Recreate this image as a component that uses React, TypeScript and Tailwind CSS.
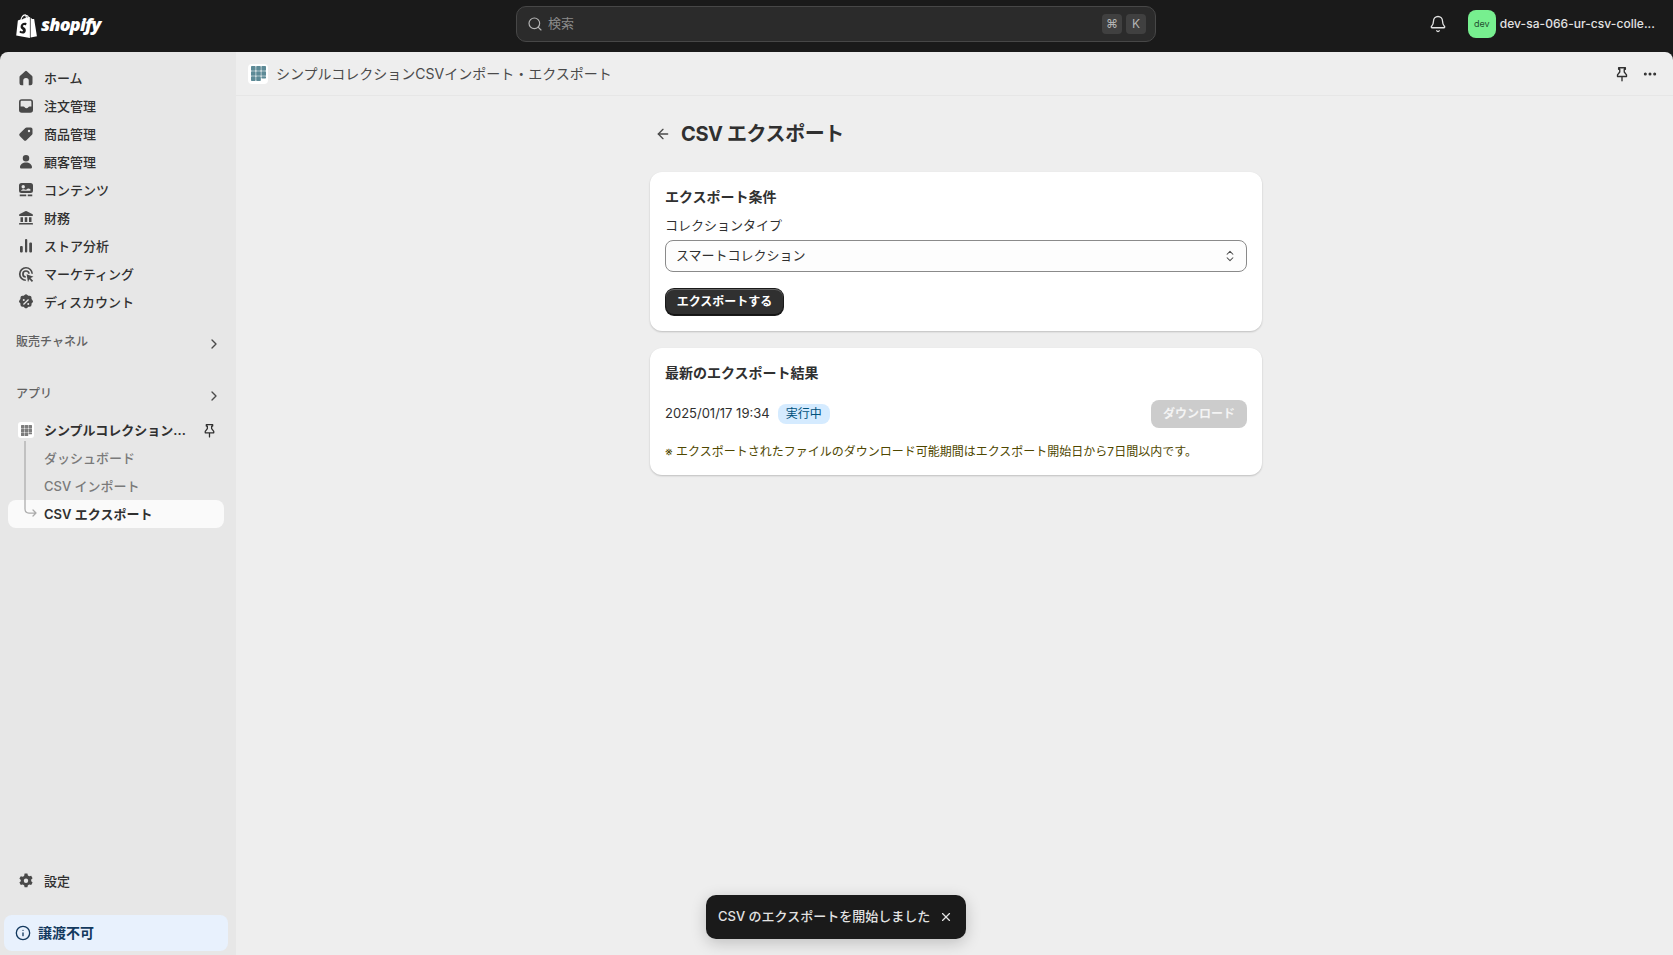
import { X, ChevronRight, Ellipsis, ArrowLeft, ChevronsUpDown, Search, Bell, Info } from "lucide-react"

const sans = "font-['Inter','Noto_Sans_CJK_JP',sans-serif]"

const icons: Record<string, string> = {
  home: "M9.14 3.14a1.25 1.25 0 0 1 1.72 0l5.25 4.96c.25.23.39.56.39.9v6.25a2 2 0 0 1-2 2h-1.75v-4.5a2.75 2.75 0 0 0-5.5 0v4.5h-1.75a2 2 0 0 1-2-2V9c0-.34.14-.67.39-.9z",
  orders: "M5.75 3.25A2.75 2.75 0 0 0 3 6v8a2.75 2.75 0 0 0 2.75 2.75h8.5A2.75 2.75 0 0 0 17 14V6a2.75 2.75 0 0 0-2.75-2.75zM4.6 10.6V6c0-.63.52-1.15 1.15-1.15h8.5c.63 0 1.15.52 1.15 1.15v4.6h-1.8a1.5 1.5 0 0 0-1.3.75 2.1 2.1 0 0 1-1.8 1 2.1 2.1 0 0 1-1.8-1 1.5 1.5 0 0 0-1.3-.75z",
  tag: "M10.6 3.5h4.15A1.75 1.75 0 0 1 16.5 5.25V9.4c0 .46-.18.9-.51 1.24l-5.6 5.6a1.75 1.75 0 0 1-2.47 0l-4.16-4.16a1.75 1.75 0 0 1 0-2.47l5.6-5.6c.33-.33.78-.51 1.24-.51zM13 8.2a1.2 1.2 0 1 0 0-2.4 1.2 1.2 0 0 0 0 2.4z",
  person: "M10 3a3.25 3.25 0 1 0 0 6.5A3.25 3.25 0 0 0 10 3zM10 10.5c-3.4 0-5.75 1.9-6 4.4-.1 1 .7 1.6 1.5 1.6h9c.8 0 1.6-.6 1.5-1.6-.25-2.5-2.6-4.4-6-4.4z",
  content: "M5.5 3A2.5 2.5 0 0 0 3 5.5v5A2.5 2.5 0 0 0 5.5 13h9a2.5 2.5 0 0 0 2.5-2.5v-5A2.5 2.5 0 0 0 14.5 3zM7.2 5a1.7 1.7 0 0 1 1.7 1.7c0 .9-.7 1.7-1.7 1.7a1.7 1.7 0 0 1 0-3.4zM5 10.8c.6-1 1.5-1.5 2.4-1.5 1 0 1.5.5 2.2.5 1 0 1.4-1.4 2.7-1.4.8 0 1.5.5 2.2 1.2v.7c0 .3-.2.5-.5.5H5zM3.75 14.5h6.5v1.75h-6.5zM11.75 14.5h4.5v1.75h-4.5z",
  bank: "M9.2 3.2a1.75 1.75 0 0 1 1.6 0l5.4 2.7c.5.25.8.75.8 1.3v.05c0 .4-.35.75-.75.75H3.75A.75.75 0 0 1 3 7.25V7.2c0-.55.3-1.05.8-1.3zM4.5 9.25H7V14H4.5zM8.75 9.25h2.5V14h-2.5zM13 9.25h2.5V14H13zM3.75 15h12.5a.75.75 0 0 1 .75.75v.75H3v-.75a.75.75 0 0 1 .75-.75z",
  chart: "M9 3.75A1 1 0 0 1 10 3h.25a1 1 0 0 1 1 1v11.5a1 1 0 0 1-1 1H10a1 1 0 0 1-1-1zM14.25 6.5H15a1 1 0 0 1 1 1v8a1 1 0 0 1-1 1h-.75a1 1 0 0 1-1-1v-8a1 1 0 0 1 1-1zM5 10h.75a1 1 0 0 1 1 1v4.5a1 1 0 0 1-1 1H5a1 1 0 0 1-1-1V11a1 1 0 0 1 1-1z",
  target: "M10 3a7 7 0 0 1 7 6.8h-1.6A5.4 5.4 0 1 0 9.8 15.4V17A7 7 0 0 1 10 3zm0 3.2a3.8 3.8 0 0 1 3.8 3.6h-1.6A2.2 2.2 0 1 0 9.8 12.2v1.6A3.8 3.8 0 0 1 10 6.2zM10.6 10.2l6.9 2.6-3 1.3 2.6 2.6-1.2 1.2-2.6-2.6-1.3 3z",
  discount: "M8.6 2.9a2 2 0 0 1 2.8 0l.9.85 1.25-.02a2 2 0 0 1 2 2l-.02 1.25.85.9a2 2 0 0 1 0 2.8l-.85.9.02 1.25a2 2 0 0 1-2 2l-1.25-.02-.9.85a2 2 0 0 1-2.8 0l-.9-.85-1.25.02a2 2 0 0 1-2-2l.02-1.25-.85-.9a2 2 0 0 1 0-2.8l.85-.9-.02-1.25a2 2 0 0 1 2-2l1.25.02zM7.75 9a1 1 0 1 0 0-2 1 1 0 0 0 0 2zm4.5 4a1 1 0 1 0 0-2 1 1 0 0 0 0 2zm.75-5-.9-.9-5.1 5 .9.9z",
  gear: "M8.6 2.6h2.8l.5 1.9 1.4.8 1.9-.5 1.4 2.4-1.4 1.4v1.6l1.4 1.4-1.4 2.4-1.9-.5-1.4.8-.5 1.9H8.6l-.5-1.9-1.4-.8-1.9.5-1.4-2.4 1.4-1.4V9l-1.4-1.4 1.4-2.4 1.9.5 1.4-.8zM10 12a2.2 2.2 0 1 0 0-4.4 2.2 2.2 0 0 0 0 4.4z",
}

const nav: [string, string][] = [
  ["home", "ホーム"],
  ["orders", "注文管理"],
  ["tag", "商品管理"],
  ["person", "顧客管理"],
  ["content", "コンテンツ"],
  ["bank", "財務"],
  ["chart", "ストア分析"],
  ["target", "マーケティング"],
  ["discount", "ディスカウント"],
]

function NavIcon({ name }: { name: string }) {
  return (
    <svg viewBox="0 0 20 20" className="w-5 h-5 shrink-0 text-[#4a4a4a]" fill="currentColor" fillRule="evenodd">
      <path d={icons[name]} />
    </svg>
  )
}

function NavItem({ icon, label }: { icon: string; label: string }) {
  return (
    <div className="flex items-center gap-2 h-7 pl-2 text-[13px] font-medium text-[#303030]">
      <NavIcon name={icon} />
      <span className="pt-[1px]">{label}</span>
    </div>
  )
}

function PinIcon({ className }: { className: string }) {
  return (
    <svg viewBox="0 0 20 20" className={className} fill="none" stroke="currentColor" strokeWidth="1.5" strokeLinejoin="round" strokeLinecap="round">
      <path d="M6.25 3h7.5v1.75H12.5v3l2.5 3.25v1.75H5V11l2.5-3.25v-3H6.25zM10 12.75V17.5" />
    </svg>
  )
}

function AppGrid({ className, color }: { className: string; color: string }) {
  const cells = [0, 1, 2]
  return (
    <svg viewBox="0 0 11 11" className={className}>
      {cells.map((r) =>
        cells.map((c) => <rect key={`${r}-${c}`} x={c * 3.8} y={r * 3.8} width="3.4" height={r === 2 && c === 2 ? 1.6 : 3.4} rx="0.5" fill={color} />)
      )}
    </svg>
  )
}

function ShopifyBag() {
  return (
    <svg viewBox="0 0 22 25" className="w-[22px] h-[25px]">
      <path fill="#fff" d="M18.2 5.2c0-.1-.1-.2-.2-.2l-1.9-.1-1.5-1.5V23.6l6.4-1.4S18.2 5.3 18.2 5.2zM13.7 2.9l-.8.3C12.5 1.9 11.8 1 10.6 1h-.1C10.1.5 9.6.2 9.2.2 6.3.2 4.9 3.8 4.5 5.6l-2 .6c-.6.2-.6.2-.7.8L.2 21.5 13.9 24V2.8zM9.8 3.9l-2.4.7c.4-1.5 1.1-2.3 1.8-2.5.3.4.6 1 .6 1.8zM9.2 1.500c.1 0 .3 0 .4.1-.9.4-1.800 1.400-2.200 3.400l-1.900.6C6 4 7.200 1.500 9.200 1.500zM10.700 8.900l-.8 2.500s-.7-.4-1.600-.4c-1.300 0-1.400.8-1.400 1 0 1.100 2.900 1.600 2.900 4.200 0 2.100-1.300 3.400-3.100 3.400-2.100 0-3.200-1.300-3.200-1.300l.6-1.900s1.100 1 2 1c.6 0 .9-.5.9-.8 0-1.500-2.400-1.500-2.400-3.900 0-2 1.500-4 4.400-4 1.100 0 1.700.7 1.700.7zM10.800 3.500v-.2c0-.6-.1-1.100-.2-1.400.6.1 1 .8 1.300 1.300z" />
    </svg>
  )
}

export default function App() {
  return (
    <div className={`${sans} h-[955px] w-[1673px] overflow-hidden bg-[#1a1a1a] flex flex-col relative`}>
      <header className="h-[52px] shrink-0 flex items-center relative">
        <div className="flex items-center gap-[3px] pl-[16px]">
          <ShopifyBag />
          <span className="font-['Open_Sans',sans-serif] italic font-extrabold text-[18px] tracking-[-0.8px] text-white mb-[3px]">shopify</span>
        </div>
        <div className="absolute left-[516px] top-[6px] w-[640px] h-9 rounded-[10px] bg-[#2b2b2b] border border-[#474747] flex items-center pl-[10px] pr-[9px]">
          <Search className="w-4 h-4 text-[#b5b5b5]" strokeWidth={1.75} />
          <span className="ml-[5px] text-[13px] text-[#8a8a8a]">検索</span>
          <div className="ml-auto flex gap-[4px]">
            <span className="w-5 h-5 rounded-[4px] bg-[#404040] text-[#b5b5b5] text-[12px] flex items-center justify-center">⌘</span>
            <span className="w-5 h-5 rounded-[4px] bg-[#404040] text-[#b5b5b5] text-[12px] flex items-center justify-center">K</span>
          </div>
        </div>
        <div className="ml-auto flex items-center pr-[18px] mb-[4px]">
          <Bell className="w-[18px] h-[18px] text-[#e3e3e3] mr-[21px]" strokeWidth={1.75} />
          <div className="w-7 h-7 rounded-[8px] bg-[#77ef8f] text-[#1f5130] text-[9px] flex items-center justify-center mr-[4px]">dev</div>
          <span className="text-[12px] tracking-[0.05px] font-medium text-[#e3e3e3]">dev-sa-066-ur-csv-colle...</span>
        </div>
      </header>

      <div className="flex flex-1 min-h-0">
        <aside className="w-[236px] shrink-0 bg-[#e7e7e7] rounded-tl-[8px] flex flex-col pt-3 relative">
          <nav className="px-2">
            {nav.map(([icon, label]) => (
              <NavItem key={label} icon={icon} label={label} />
            ))}
            <div className="mt-[14px] h-7 flex items-center justify-between pl-2 pr-[6px]">
              <span className="text-[12px] font-medium text-[#616161] mb-[5px]">販売チャネル</span>
              <ChevronRight className="w-4 h-4 text-[#4a4a4a]" />
            </div>
            <div className="mt-6 h-7 flex items-center justify-between pl-2 pr-[6px]">
              <span className="text-[12px] font-medium text-[#616161] mb-[5px]">アプリ</span>
              <ChevronRight className="w-4 h-4 text-[#4a4a4a]" />
            </div>
            <div className="mt-[6px] relative">
              <div className="h-7 flex items-center pl-[10px] pr-[8px] text-[13px] font-semibold text-[#303030]">
                <span className="w-4 h-4 rounded-[3px] bg-white flex items-center justify-center shrink-0">
                  <AppGrid className="w-[11px] h-[11px]" color="#7d7d7d" />
                </span>
                <span className="ml-[10px] pt-[1px] w-[142px] truncate">シンプルコレクション...</span>
                <PinIcon className="ml-[15px] w-[17px] h-[17px] text-[#303030]" />
              </div>
              <div className="h-7 flex items-center pl-9 pt-[1px] text-[13px] font-medium text-[#7a7a7a]">ダッシュボード</div>
              <div className="h-7 flex items-center pl-9 pt-[1px] text-[13px] font-medium text-[#7a7a7a]">CSV インポート</div>
              <div className="h-7 flex items-center pl-9 pt-[1px] text-[13px] font-semibold text-[#303030] bg-[#fafafa] rounded-[8px] w-[216px]">CSV エクスポート</div>
              <svg viewBox="0 0 20 76" className="absolute left-[12px] top-[25px] w-5 h-[76px]" fill="none" stroke="#ababab" strokeWidth="1.25" strokeLinecap="round" strokeLinejoin="round">
                <path d="M5 0v68q0 4 4 4h7M13 69l3 3-3 3" />
              </svg>
            </div>
          </nav>
          <div className="mt-auto px-2">
            <NavItem icon="gear" label="設定" />
          </div>
          <div className="ml-[4px] mr-[8px] mt-[20px] mb-[4px] h-[36px] rounded-[8px] bg-[#e8f1fd] flex items-center gap-[7px] pl-[11px] text-[14px] font-semibold text-[#13395e]">
            <Info className="w-4 h-4" strokeWidth={2} />
            <span className="mb-[1px]">譲渡不可</span>
          </div>
        </aside>

        <main className="flex-1 bg-[#eeeeee] rounded-tr-[8px] flex flex-col min-w-0">
          <div className="h-[44px] shrink-0 border-b border-[#e6e6e6] flex items-center pl-3 pr-[14px]">
            <span className="w-5 h-5 rounded-[4px] bg-white flex items-center justify-center">
              <AppGrid className="w-[15px] h-[15px]" color="#5d8a96" />
            </span>
            <span className="ml-2 text-[14px] text-[#4a4a4a]">シンプルコレクションCSVインポート・エクスポート</span>
            <PinIcon className="ml-auto w-[18px] h-[18px] text-[#303030]" />
            <Ellipsis className="ml-[11px] mr-[1px] w-4 h-4 text-[#303030]" strokeWidth={2.5} />
          </div>

          <div className="w-[612px] ml-[414px] pt-[24px] text-[#303030]">
            <div className="flex items-center h-[28px] pl-[5px] mb-[24px]">
              <ArrowLeft className="w-4 h-4 text-[#4a4a4a]" strokeWidth={2} />
              <h1 className="ml-[10px] text-[20px] tracking-[-0.4px] font-bold text-[#303030]">CSV エクスポート</h1>
            </div>

            <section className="h-[159px] bg-white rounded-[12px] shadow-[0_1px_2px_rgba(0,0,0,0.2)] px-[15px] pt-[15px]">
              <h2 className="text-[14px] leading-5 font-semibold">エクスポート条件</h2>
              <div className="mt-[9px] text-[13px] leading-[18px] text-[#303030]">コレクションタイプ</div>
              <div className="mt-[6px] h-8 rounded-[8px] border border-[#8a8a8a] bg-[#fdfdfd] flex items-center pl-[10px] pr-[9px] text-[13px] text-[#303030]">
                スマートコレクション
                <ChevronsUpDown className="ml-auto w-[14px] h-[14px] text-[#4a4a4a]" strokeWidth={1.75} />
              </div>
              <button className="block ml-[1px] mt-[17px] h-[26px] w-[117px] rounded-[8px] bg-[#303030] shadow-[inset_0_1px_0_rgba(255,255,255,0.25),inset_0_-1px_0_rgba(0,0,0,0.6),0_0_0_1px_#1a1a1a] text-white text-[12px] font-semibold">
                エクスポートする
              </button>
            </section>

            <section className="mt-[17px] h-[127px] bg-white rounded-[12px] shadow-[0_1px_2px_rgba(0,0,0,0.2)] px-[15px] pt-[15px]">
              <h2 className="text-[14px] leading-5 font-semibold">最新のエクスポート結果</h2>
              <div className="mt-[17px] h-7 flex items-center">
                <span className="text-[13px]">2025/01/17 19:34</span>
                <span className="ml-2 h-5 w-[52px] rounded-[8px] bg-[#d5ebff] text-[#00527c] text-[12px] flex items-center justify-center">実行中</span>
                <button className="ml-auto h-7 w-[96px] rounded-[8px] bg-[#cccccc] text-[#f4f4f4] text-[12px] font-semibold">ダウンロード</button>
              </div>
              <p className="mt-[16px] text-[12px] leading-4 text-[#4f4700]">※ エクスポートされたファイルのダウンロード可能期間はエクスポート開始日から7日間以内です。</p>
            </section>
          </div>
        </main>
      </div>

      <div className="absolute left-[706px] top-[895px] w-[260px] h-[44px] rounded-[10px] bg-[#1a1a1a] shadow-[0_4px_16px_rgba(0,0,0,0.2)] flex items-center pl-[12px] pr-[13px] text-[13px] font-medium text-[#e3e3e3]">
        <span>CSV のエクスポートを開始しました</span>
        <X className="ml-auto w-[14px] h-[14px]" strokeWidth={2} />
      </div>
    </div>
  )
}
